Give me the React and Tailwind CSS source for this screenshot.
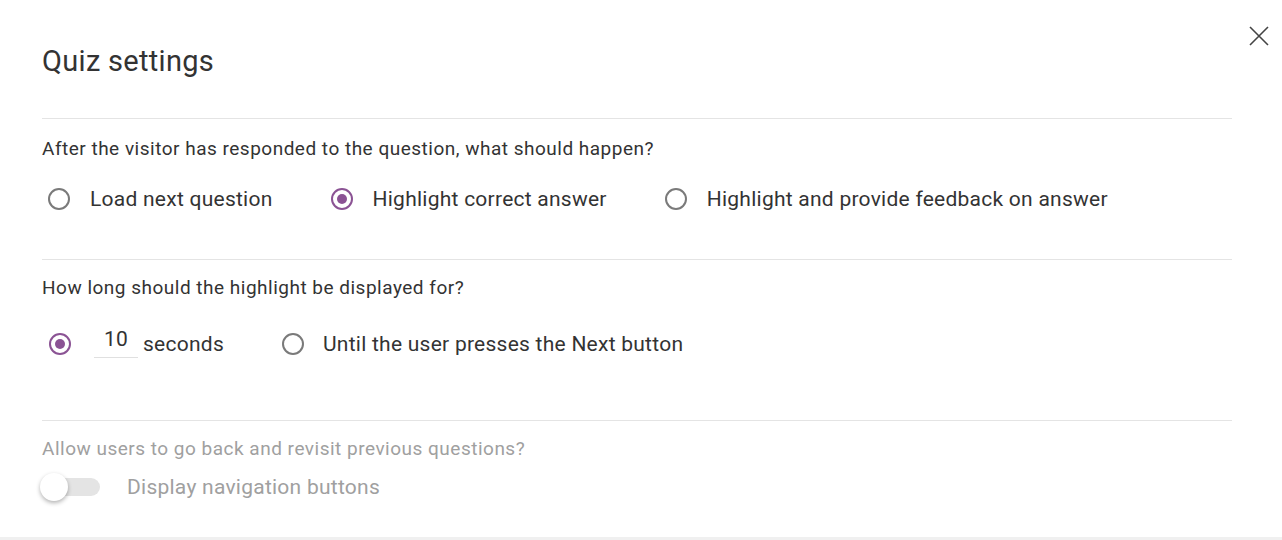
import React, { useState } from "react";

const Radio = ({ checked, onClick }) => (
  <button
    onClick={onClick}
    className={`w-[22px] h-[22px] rounded-full border-2 flex items-center justify-center shrink-0 ${
      checked ? "border-[#8b5394]" : "border-[#7a7a7a]"
    }`}
  >
    {checked && <span className="w-[10px] h-[10px] rounded-full bg-[#8b5394]" />}
  </button>
);

const App = () => {
  const [action, setAction] = useState("highlight");
  const [duration, setDuration] = useState("seconds");
  const [seconds, setSeconds] = useState("10");
  const [nav, setNav] = useState(false);

  const actions = [
    { id: "next", label: "Load next question" },
    { id: "highlight", label: "Highlight correct answer" },
    { id: "feedback", label: "Highlight and provide feedback on answer" },
  ];

  return (
    <div
      className="relative w-[1282px] h-[540px] bg-white overflow-hidden text-[#333333]"
      style={{ fontFamily: "Roboto, 'Liberation Sans', sans-serif" }}
    >
      <button className="absolute right-[13px] top-[26px] text-[#444]" title="Close">
        <svg width="20" height="20" viewBox="0 0 20 20" fill="none" stroke="currentColor" strokeWidth="1.6">
          <path d="M1 1L19 19M19 1L1 19" />
        </svg>
      </button>

      <div className="pl-[42px] pr-[50px]">
        {/* Title */}
        <h1 className="pt-[44px] text-[29px] leading-[34px] tracking-[0.3px] font-normal">Quiz settings</h1>

        {/* After response */}
        <div className="mt-[40px] border-t border-[#e4e4e4] pt-[19px]">
          <p className="text-[19px] leading-[22px] tracking-[0.5px]">
            After the visitor has responded to the question, what should happen?
          </p>
          <div className="flex items-center mt-[27px] pl-[6px] h-[24px]">
            {actions.map((a) => (
              <div key={a.id} className="flex items-center mr-[58px]">
                <Radio checked={action === a.id} onClick={() => setAction(a.id)} />
                <span className="ml-[20px] text-[21px] leading-[24px] tracking-[0.25px]">{a.label}</span>
              </div>
            ))}
          </div>
        </div>

        {/* Highlight duration */}
        <div className="mt-[48px] border-t border-[#e4e4e4] pt-[17px]">
          <p className="text-[19px] leading-[22px] tracking-[0.5px]">How long should the highlight be displayed for?</p>
          <div className="flex items-center mt-[33px] pl-[7px] h-[24px]">
            <Radio checked={duration === "seconds"} onClick={() => setDuration("seconds")} />
            <input
              value={seconds}
              onChange={(e) => setSeconds(e.target.value)}
              className="ml-[23px] w-[44px] border-b border-[#e0e0e0] text-center text-[21px] leading-[24px] tracking-[0.25px] pb-[6px] mb-[-4px] -mt-[8px] outline-none bg-transparent"
            />
            <span className="ml-[5px] text-[21px] leading-[24px] tracking-[0.25px]">seconds</span>
            <div className="flex items-center ml-[58px]">
              <Radio checked={duration === "next"} onClick={() => setDuration("next")} />
              <span className="ml-[19px] text-[21px] leading-[24px] tracking-[0.25px]">
                Until the user presses the Next button
              </span>
            </div>
          </div>
        </div>

        {/* Navigation */}
        <div className="mt-[64px] border-t border-[#e4e4e4] pt-[17px] text-[#a0a0a0]">
          <p className="text-[19px] leading-[22px] tracking-[0.5px]">
            Allow users to go back and revisit previous questions?
          </p>
          <div className="flex items-center mt-[12px] h-[30px]">
            <button
              onClick={() => setNav(!nav)}
              className="relative w-[60px] h-[30px] -ml-[2px] flex items-center"
            >
              <span className="absolute left-[4px] right-0 h-[18px] rounded-full bg-[#e4e4e4]" />
              <span className="absolute left-0 w-[28px] h-[28px] rounded-full bg-white shadow-[0_2px_4px_rgba(0,0,0,0.3)]" />
            </button>
            <span className="ml-[27px] text-[21px] leading-[24px] tracking-[0.25px]">Display navigation buttons</span>
          </div>
        </div>
      </div>

      <div className="absolute left-0 right-0 bottom-0 h-[3px] bg-[#f0f0f0]" />
    </div>
  );
};

export default App;
